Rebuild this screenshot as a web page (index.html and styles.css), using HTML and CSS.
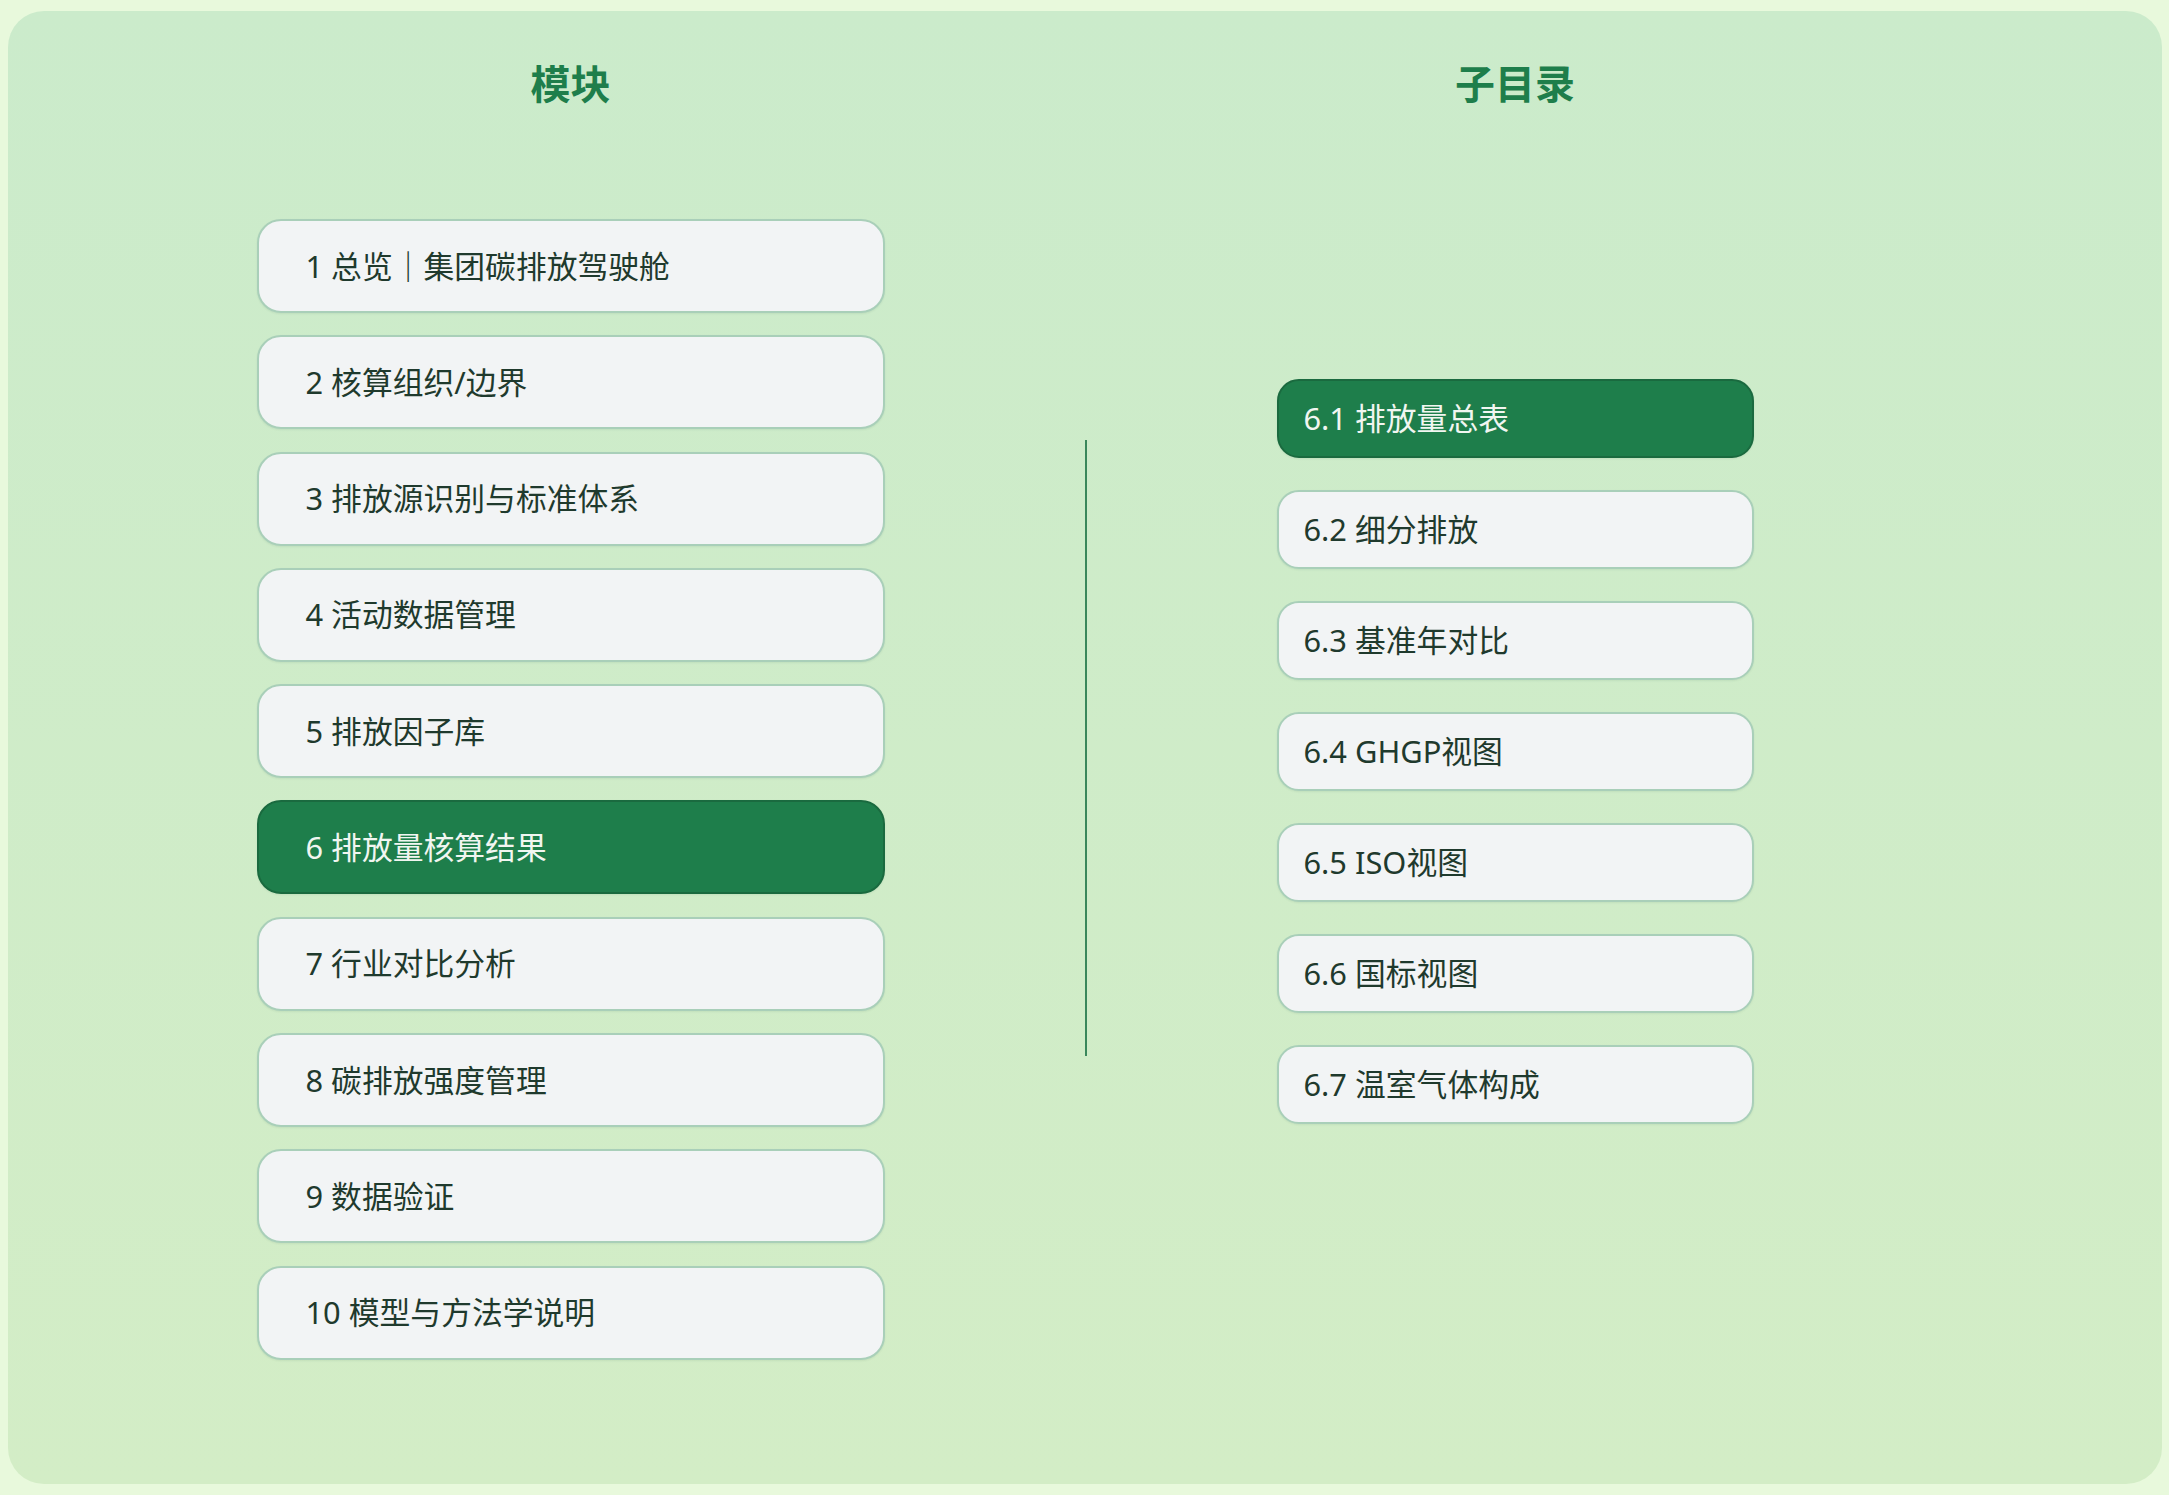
FILE: index.html
```html
<!DOCTYPE html>
<html lang="zh-CN">
<head>
    <meta charset="UTF-8">
    <meta name="viewport" content="width=device-width, initial-scale=1.0">
    <title>模块导航</title>
    <link rel="stylesheet" href="styles.css">
</head>
<body>

    <div class="panel">
        <!-- 左侧：一级模块 -->
        <section class="column column-main">
            <h2 class="column-title">模块</h2>
            <ul class="module-list">
                <li class="module-item">1 总览｜集团碳排放驾驶舱</li>
                <li class="module-item">2 核算组织/边界</li>
                <li class="module-item">3 排放源识别与标准体系</li>
                <li class="module-item">4 活动数据管理</li>
                <li class="module-item">5 排放因子库</li>
                <li class="module-item active">6 排放量核算结果</li>
                <li class="module-item">7 行业对比分析</li>
                <li class="module-item">8 碳排放强度管理</li>
                <li class="module-item">9 数据验证</li>
                <li class="module-item">10 模型与方法学说明</li>
            </ul>
        </section>

        <div class="divider"></div>

        <!-- 右侧：当前模块的子目录 -->
        <section class="column column-sub">
            <h2 class="column-title">子目录</h2>
            <ul class="sub-list">
                <li class="sub-item active">6.1 排放量总表</li>
                <li class="sub-item">6.2 细分排放</li>
                <li class="sub-item">6.3 基准年对比</li>
                <li class="sub-item">6.4 GHGP视图</li>
                <li class="sub-item">6.5 ISO视图</li>
                <li class="sub-item">6.6 国标视图</li>
                <li class="sub-item">6.7 温室气体构成</li>
            </ul>
        </section>
    </div>

</body>
</html>
```

FILE: styles.css
```css
* {
    box-sizing: border-box;
}
html, body {
    height: 100%;
}
body {
    margin: 0;
    padding: 11px 7px 11px 8px;
    background-color: #e8f9dc;
    font-family: "Noto Sans", "Noto Sans CJK SC", sans-serif;
    color: #1f3a2d;
}
.panel {
    height: 100%;
    display: grid;
    grid-template-columns: 1029px 2px 856px;
    padding-left: 48px;
    border-radius: 36px;
    background: linear-gradient(180deg, #cbebcb 0%, #d3edc6 100%);
}
.column {
    display: flex;
    flex-direction: column;
    align-items: center;
}
.column-title {
    margin: 47px 0 0;
    font-family: "Noto Sans CJK SC", sans-serif;
    font-size: 40px;
    line-height: 48px;
    font-weight: 700;
    color: #1e7e4b;
}
.divider {
    align-self: center;
    height: 616px;
    background-color: #3a875b;
}
ul {
    margin: 0;
    padding: 0;
    list-style: none;
}
.module-list {
    margin-top: 113px;
    width: 628px;
    display: flex;
    flex-direction: column;
    gap: 22.3px;
}
.sub-list {
    margin-top: 273px;
    width: 477px;
    display: flex;
    flex-direction: column;
    gap: 32px;
}
.module-item,
.sub-item {
    display: flex;
    align-items: center;
    font-size: 30.8px;
    padding-bottom: 4px;
    background-color: #f2f4f5;
    border: 2px solid #a9cfb9;
    border-radius: 24px;
    box-shadow: 0 1px 2px rgba(30, 80, 50, 0.08);
}
.module-item {
    height: 94px;
    padding-left: 47px;
}
.sub-item {
    height: 79px;
    padding-left: 25px;
    border-radius: 22px;
}
.module-item.active,
.sub-item.active {
    background-color: #1e7e4b;
    border-color: #1a6a3f;
    color: #f1f6f1;
}
```
